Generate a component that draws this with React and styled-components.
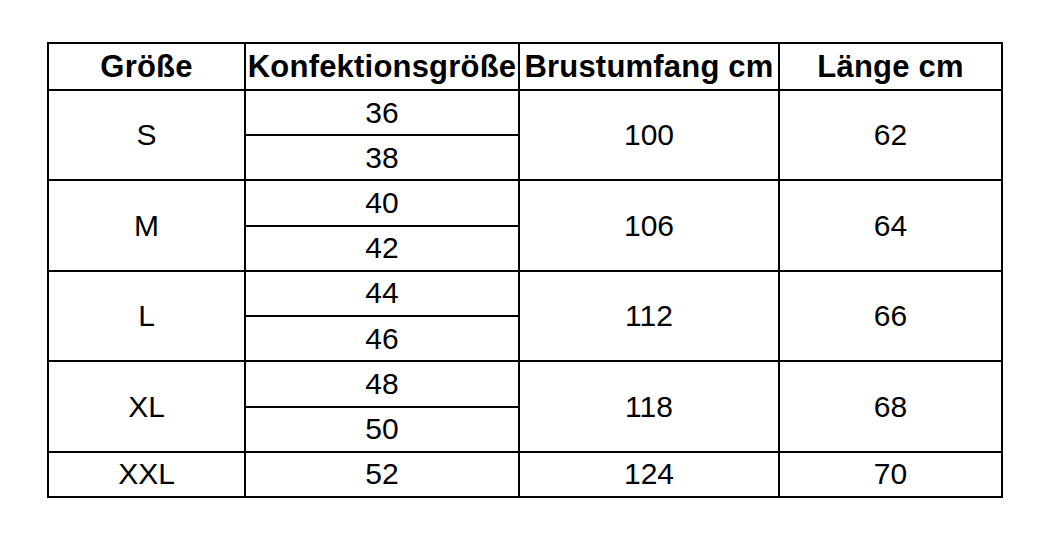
import styled, { createGlobalStyle } from "styled-components";

const GlobalStyle = createGlobalStyle`
  body {
    margin: 0;
    background: #fff;
    font-family: "Liberation Sans", Arial, sans-serif;
  }
`;

const sizes = [
  { size: "S", konf: ["36", "38"], brust: "100", laenge: "62" },
  { size: "M", konf: ["40", "42"], brust: "106", laenge: "64" },
  { size: "L", konf: ["44", "46"], brust: "112", laenge: "66" },
  { size: "XL", konf: ["48", "50"], brust: "118", laenge: "68" },
  { size: "XXL", konf: ["52"], brust: "124", laenge: "70" },
];

export default function App() {
  return (
    <Page>
      <GlobalStyle />
      <Table>
        <HeadCell>Größe</HeadCell>
        <HeadCell>Konfektionsgröße</HeadCell>
        <HeadCell>Brustumfang cm</HeadCell>
        <HeadCell>Länge cm</HeadCell>
        {sizes.map((row) => {
          const span = row.konf.length;
          return [
            <Cell key={row.size + "-s"} $span={span}>{row.size}</Cell>,
            <Cell key={row.size + "-k0"}>{row.konf[0]}</Cell>,
            <Cell key={row.size + "-b"} $span={span}>{row.brust}</Cell>,
            <Cell key={row.size + "-l"} $span={span}>{row.laenge}</Cell>,
            span > 1 && <Cell key={row.size + "-k1"}>{row.konf[1]}</Cell>,
          ];
        })}
      </Table>
    </Page>
  );
}

const Page = styled.div`
  padding: 42px 0 0 47px;
`;

const Table = styled.div`
  display: grid;
  grid-template-columns: 195px 272px 258px 221px;
  grid-template-rows: 45px repeat(9, 1fr);
  height: 456px;
  width: 956px;
  box-sizing: border-box;
  gap: 2px;
  padding: 2px;
  background: #000;
`;

const Cell = styled.div`
  grid-row: span ${(p) => p.$span || 1};
  background: #fff;
  display: flex;
  align-items: center;
  justify-content: center;
  font-size: 30px;
  color: #000;
  line-height: 1;
`;

const HeadCell = styled(Cell)`
  font-weight: bold;
  font-size: 31px;
  letter-spacing: 0.2px;
  white-space: nowrap;
`;
